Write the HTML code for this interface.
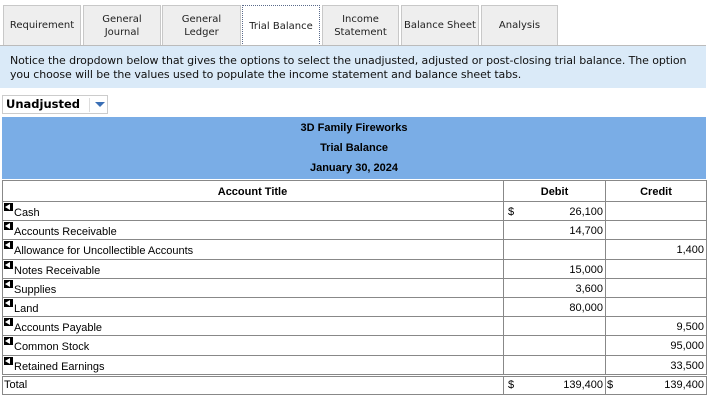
<!DOCTYPE html>
<html><head><style>
body{margin:0;width:718px;height:401px;background:#fff;position:relative;overflow:hidden;font-family:"Liberation Sans",Arial,sans-serif;}
.tab{position:absolute;top:5px;height:40px;background:#eeeeee;border:1px solid #c8c8c8;border-bottom:none;box-sizing:border-box;font-family:"DejaVu Sans",Verdana,sans-serif;font-size:10px;color:#222;display:flex;align-items:center;justify-content:center;text-align:center;line-height:13px;}
.tab.act{background:#fff;border:1px dotted #5a6a8a;border-bottom:none;height:41px;}
.note{position:absolute;left:0;top:45px;width:706px;height:43px;background:#daeaf8;border-top:1px solid #bbb;box-sizing:border-box;font-family:"DejaVu Sans",Verdana,sans-serif;font-size:11px;color:#111;padding:8px 0 0 10px;line-height:13.5px;white-space:nowrap;letter-spacing:-0.1px;}
.dd{position:absolute;left:2px;top:95px;width:106px;height:19px;border:1px solid #ccc;box-sizing:border-box;font-family:"DejaVu Sans",Verdana,sans-serif;font-weight:bold;font-size:11.5px;padding:1px 0 0 3px;}
.dd .sep{position:absolute;left:86px;top:2px;width:1px;height:14px;background:#ddd;}
.dd .arr{position:absolute;left:92px;top:6px;width:0;height:0;border-left:5px solid transparent;border-right:5px solid transparent;border-top:5px solid #3a6fb5;}
.hdr{position:absolute;left:2px;top:117px;width:704px;height:62px;background:#7aade6;font-weight:bold;font-size:11px;text-align:center;}
.hdr div{position:absolute;left:0;width:100%;}
table{position:absolute;left:2px;top:180px;width:705px;border-collapse:collapse;table-layout:fixed;font-size:11px;font-family:"Liberation Sans",Arial,sans-serif;}
tr{height:19.2px;}
td{border:1px solid #888;padding:3px 2px 0 2px;white-space:nowrap;line-height:14px;vertical-align:top;overflow:visible;}
tr.h{height:21px;}
tr.h td{font-weight:bold;text-align:center;padding-top:4px;}
td.a{padding-left:1px;padding-top:2px;position:relative;}
td.d{text-align:right;position:relative;}
td.c{text-align:right;position:relative;}
.ic{position:absolute;left:1px;top:1px;width:9px;height:8px;background:#000;}
.ic:after{content:"";position:absolute;left:1px;top:1px;border-right:5px solid #fff;border-top:3px solid transparent;border-bottom:3px solid transparent;}
.tx{display:inline-block;padding-left:10px;padding-top:2px;}
.s{position:absolute;left:4px;}
tr.t{height:19px;}
tr.t td{border-top:3px double #888;padding-top:1px;}
tr.t td.a{padding-top:1px;}
</style></head><body>
<div class="tab" style="left:3px;width:78px">Requirement</div>
<div class="tab" style="left:83px;width:78px">General<br>Journal</div>
<div class="tab" style="left:162px;width:79px">General<br>Ledger</div>
<div class="tab act" style="left:242px;width:78px">Trial Balance</div>
<div class="tab" style="left:322px;width:77px">Income<br>Statement</div>
<div class="tab" style="left:401px;width:78px">Balance Sheet</div>
<div class="tab" style="left:481px;width:77px">Analysis</div>
<div class="note">Notice the dropdown below that gives the options to select the unadjusted, adjusted or post-closing trial balance. The option<br>you choose will be the values used to populate the income statement and balance sheet tabs.</div>
<div class="dd">Unadjusted<span class="sep"></span><span class="arr"></span></div>
<div class="hdr"><div style="top:5px">3D Family Fireworks</div><div style="top:25px">Trial Balance</div><div style="top:45px">January 30, 2024</div></div>
<table>
<colgroup><col style="width:501px"><col style="width:102px"><col style="width:101px"></colgroup>
<tr class="h"><td class="a" style="padding-top:4px">Account Title</td><td class="d" style="text-align:center">Debit</td><td class="c" style="text-align:center">Credit</td></tr>
<tr><td class="a"><span class="ic"></span><span class="tx">Cash</span></td><td class="d"><span class="s">$</span>26,100</td><td class="c"></td></tr>
<tr><td class="a"><span class="ic"></span><span class="tx">Accounts Receivable</span></td><td class="d">14,700</td><td class="c"></td></tr>
<tr><td class="a"><span class="ic"></span><span class="tx">Allowance for Uncollectible Accounts</span></td><td class="d"></td><td class="c">1,400</td></tr>
<tr><td class="a"><span class="ic"></span><span class="tx">Notes Receivable</span></td><td class="d">15,000</td><td class="c"></td></tr>
<tr><td class="a"><span class="ic"></span><span class="tx">Supplies</span></td><td class="d">3,600</td><td class="c"></td></tr>
<tr><td class="a"><span class="ic"></span><span class="tx">Land</span></td><td class="d">80,000</td><td class="c"></td></tr>
<tr><td class="a"><span class="ic"></span><span class="tx">Accounts Payable</span></td><td class="d"></td><td class="c">9,500</td></tr>
<tr><td class="a"><span class="ic"></span><span class="tx">Common Stock</span></td><td class="d"></td><td class="c">95,000</td></tr>
<tr><td class="a"><span class="ic"></span><span class="tx">Retained Earnings</span></td><td class="d"></td><td class="c">33,500</td></tr>
<tr class="t"><td class="a">Total</td><td class="d"><span class="s">$</span>139,400</td><td class="c"><span class="s" style="left:1px">$</span>139,400</td></tr>
</table>
</body></html>
